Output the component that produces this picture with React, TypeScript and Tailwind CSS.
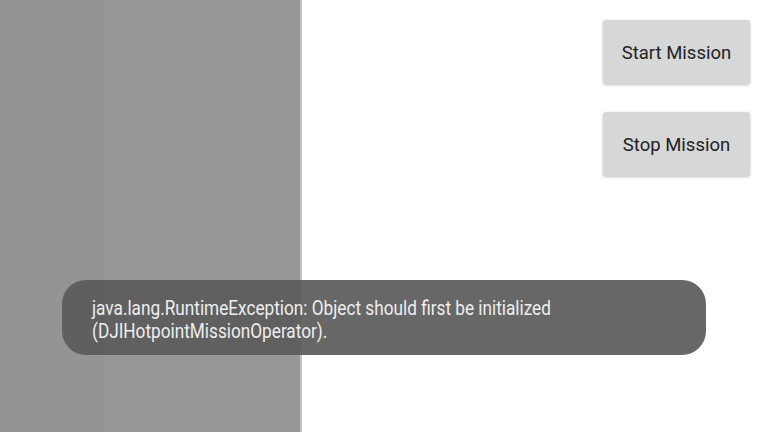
import React from "react";

export default function App() {
  return (
    <div className="relative w-[768px] h-[432px] overflow-hidden bg-white flex" style={{ fontFamily: "Roboto, 'Noto Sans', sans-serif" }}>
      <div className="flex w-[300px] h-full">
        <div className="w-[104px] h-full bg-[#949494]" />
        <div className="flex-1 h-full bg-[#979797]" />
      </div>
      <div className="w-[2px] h-full bg-[#c4c4c4]" />
      <div className="flex-1 flex flex-col items-end pt-[20px] pr-[18px] gap-[28px]">
        <button className="w-[147px] h-[64px] pt-[4px] rounded-[3px] bg-[#d6d7d7] text-[#222] text-[18.5px] shadow-[0_1px_3px_rgba(0,0,0,0.25)]">
          Start Mission
        </button>
        <button className="w-[147px] h-[64px] pt-[4px] rounded-[3px] bg-[#d6d7d7] text-[#222] text-[18.5px] shadow-[0_1px_3px_rgba(0,0,0,0.25)]">
          Stop Mission
        </button>
      </div>
      <div className="absolute left-[62px] top-[280px] w-[644px] h-[75px] rounded-[24px] bg-[rgba(91,91,91,0.93)] pl-[30px] pt-[17px] text-[#eeeeee]">
        <div className="origin-left scale-x-[0.86] w-[700px] text-[20px] leading-[23px]">
          <div>java.lang.RuntimeException: Object should first be initialized</div>
          <div>(DJIHotpointMissionOperator).</div>
        </div>
      </div>
    </div>
  );
}
